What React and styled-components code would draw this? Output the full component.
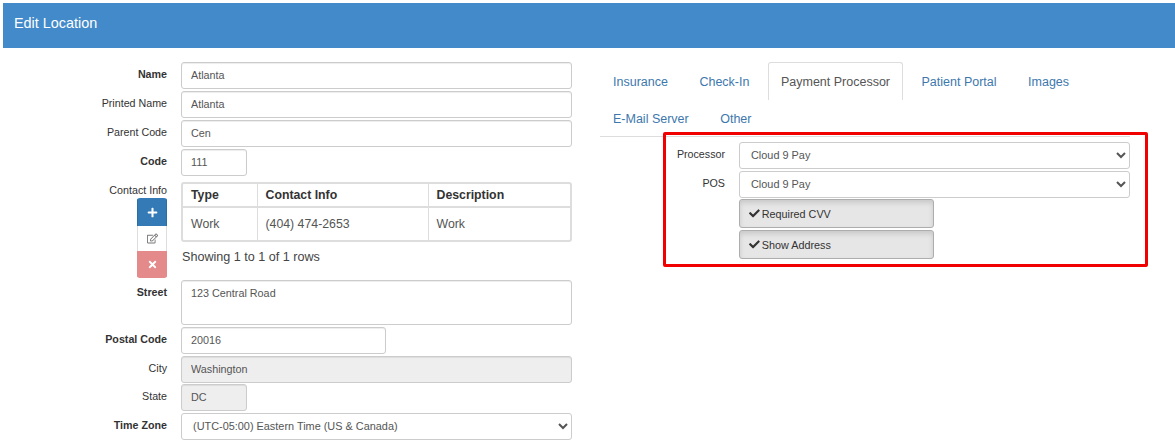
import React from 'react'
import styled, {createGlobalStyle} from 'styled-components'
import {FaCheck, FaPlus, FaRegEdit, FaTimes} from 'react-icons/fa'

const Global = createGlobalStyle`
    * { box-sizing: border-box; }
    html, body { margin: 0; background: #fff; }
    body {
        font-family: "Liberation Sans", Arial, sans-serif;
        color: #333;
        overflow: hidden;
    }
`
const Page = styled.div`
    width: 1175px;
    height: 447px;
    padding: 3px 0 0 3px;
`
const Header = styled.div`
    height: 45px;
    background: #428aca;
    color: #fff;
    font-size: 14.4px;
    line-height: 40px;
    padding-left: 11px;
`
const Body = styled.div`
    display: flex;
    gap: 28px;
    margin-left: -3px;
    padding-top: 14px;
`
const Left = styled.div`
    width: 572px;
    display: flex;
    flex-direction: column;
    gap: 2px;
`
const Row = styled.div`
    display: grid;
    grid-template-columns: 167px 391px;
    column-gap: 14px;
    margin-top: ${props => props.$top || 0}px;
`
const Label = styled.label`
    font-size: 10.7px;
    font-weight: ${props => props.$bold ? 700 : 400};
    text-align: right;
    line-height: 24px;
    color: #333;
`
const Input = styled.input`
    display: block;
    width: ${props => props.$width || '100%'};
    height: 27px;
    padding: 0 9px 2px;
    border: 1px solid #ccc;
    border-radius: 3px;
    background: ${props => props.disabled ? '#eee' : '#fff'};
    font-family: inherit;
    font-size: 10.8px;
    color: #555;
    box-shadow: inset 0 1px 1px rgba(0, 0, 0, .075);
`
const TextArea = styled.textarea`
    display: block;
    width: 100%;
    height: 45px;
    padding: 6px 9px;
    border: 1px solid #ccc;
    border-radius: 3px;
    font-family: inherit;
    font-size: 10.8px;
    color: #555;
    resize: none;
    box-shadow: inset 0 1px 1px rgba(0, 0, 0, .075);
`
const Select = styled.select`
    display: block;
    width: 100%;
    height: 27px;
    padding: 0 7px 2px;
    border: 1px solid #ccc;
    border-radius: 3px;
    background: #fff;
    font-family: inherit;
    font-size: 10.9px;
    color: #555;
`
const LabelStack = styled.div`
    display: flex;
    flex-direction: column;
    align-items: flex-end;
`
const ContactLabel = styled(Label)`
    line-height: 16px;
`
const ButtonStack = styled.div`
    width: 30px;
    display: flex;
    flex-direction: column;
    border-radius: 3px;
    overflow: hidden;
`
const IconButton = styled.button`
    width: 30px;
    height: ${props => props.$height}px;
    padding: 0;
    border: 0;
    border-left: 1px solid ${props => props.$line};
    border-right: 1px solid ${props => props.$line};
    background: ${props => props.$bg};
    color: ${props => props.$color};
    font-size: 11px;
    display: flex;
    align-items: center;
    justify-content: center;
`
const TableBox = styled.div`
    height: 60px;
    border: 2px solid #ddd;
    border-radius: 3px;
    overflow: hidden;
`
const Table = styled.table`
    width: 100%;
    height: 100%;
    border-collapse: collapse;
    table-layout: fixed;
    font-size: 12.3px;
`
const Th = styled.th`
    width: ${props => props.$width || 'auto'};
    height: 23px;
    padding: 0 0 0 8px;
    text-align: left;
    font-weight: 700;
    border-bottom: 2px solid #ddd;
    border-left: 1px solid #ddd;
    &:first-child { border-left: 0; }
`
const Td = styled.td`
    padding: 0 0 0 8px;
    color: #555;
    border-left: 1px solid #ddd;
    &:first-child { border-left: 0; }
`
const RowsInfo = styled.div`
    margin: 8px 0 0 1px;
    font-size: 12.6px;
    line-height: 14px;
    color: #444;
`
const Right = styled.div`
    position: relative;
    width: 530px;
`
const Tabs = styled.div`
    display: flex;
    flex-wrap: wrap;
    align-content: flex-start;
    column-gap: 5.5px;
    height: 75px;
    border-bottom: 1px solid #ddd;
`
const Tab = styled.a`
    height: ${props => props.$active ? 38 : 36}px;
    margin-top: ${props => props.$second ? -1 : 0}px;
    padding: 0 12px;
    border: 1px solid ${props => props.$active ? '#ddd' : 'transparent'};
    border-bottom: 0;
    border-radius: 3px 3px 0 0;
    font-size: 12.5px;
    line-height: 38px;
    color: ${props => props.$active ? '#555' : '#3d78ad'};
`
const Panel = styled.div`
    display: flex;
    flex-direction: column;
    gap: 2px;
    padding-top: 5px;
`
const PanelRow = styled.div`
    display: grid;
    grid-template-columns: 125px 391px;
    column-gap: 14px;
    margin-top: ${props => props.$top || 0}px;
`
const Toggle = styled.button`
    display: flex;
    align-items: center;
    gap: 2px;
    width: 195px;
    height: 29px;
    padding: 0 9px;
    border: 1px solid #adadad;
    border-radius: 3px;
    background: #e6e6e6;
    box-shadow: inset 0 3px 5px rgba(0, 0, 0, .125);
    font-family: inherit;
    font-size: 10.8px;
    color: #333;
`
const Highlight = styled.div`
    position: absolute;
    top: 70px;
    left: 63px;
    width: 485px;
    height: 135px;
    border: 3px solid #f00000;
    border-radius: 2px;
    pointer-events: none;
`

const Field = ({label, bold, children, top}) => (
    <Row $top={top}>
        <Label $bold={bold}>{label}</Label>
        <div>{children}</div>
    </Row>
)

const App = () => {
  return (
    <Page>
        <Global/>
        <Header>Edit Location</Header>
        <Body>
            <Left>
                <Field label="Name" bold><Input readOnly value="Atlanta"/></Field>
                <Field label="Printed Name"><Input readOnly value="Atlanta"/></Field>
                <Field label="Parent Code"><Input readOnly value="Cen"/></Field>
                <Field label="Code" bold><Input readOnly value="111" $width="66px"/></Field>
                <Row $top={4}>
                    <LabelStack>
                        <ContactLabel>Contact Info</ContactLabel>
                        <ButtonStack>
                            <IconButton $height={28} $bg="#337ab7" $line="#2e6da4" $color="#fff"><FaPlus/></IconButton>
                            <IconButton $height={25} $bg="#fff" $line="#ddd" $color="#777"><FaRegEdit/></IconButton>
                            <IconButton $height={27} $bg="#e58a8a" $line="#e58a8a" $color="#fff"><FaTimes/></IconButton>
                        </ButtonStack>
                    </LabelStack>
                    <div>
                        <TableBox>
                            <Table>
                                <thead>
                                    <tr>
                                        <Th $width="74px">Type</Th>
                                        <Th $width="171px">Contact Info</Th>
                                        <Th>Description</Th>
                                    </tr>
                                </thead>
                                <tbody>
                                    <tr>
                                        <Td>Work</Td>
                                        <Td>(404) 474-2653</Td>
                                        <Td>Work</Td>
                                    </tr>
                                </tbody>
                            </Table>
                        </TableBox>
                        <RowsInfo>Showing 1 to 1 of 1 rows</RowsInfo>
                    </div>
                </Row>
                <Field label="Street" bold><TextArea readOnly value="123 Central Road"/></Field>
                <Field label="Postal Code" bold><Input readOnly value="20016" $width="205px"/></Field>
                <Field label="City"><Input disabled value="Washington"/></Field>
                <Field label="State" top={-1}><Input disabled value="DC" $width="66px"/></Field>
                <Field label="Time Zone" bold>
                    <Select defaultValue="est"><option value="est">(UTC-05:00) Eastern Time (US &amp; Canada)</option></Select>
                </Field>
            </Left>
            <Right>
                <Tabs>
                    <Tab>Insurance</Tab>
                    <Tab>Check-In</Tab>
                    <Tab $active>Payment Processor</Tab>
                    <Tab>Patient Portal</Tab>
                    <Tab>Images</Tab>
                    <Tab $second>E-Mail Server</Tab>
                    <Tab $second>Other</Tab>
                </Tabs>
                <Panel>
                    <PanelRow>
                        <Label>Processor</Label>
                        <Select defaultValue="c9"><option value="c9">Cloud 9 Pay</option></Select>
                    </PanelRow>
                    <PanelRow>
                        <Label>POS</Label>
                        <Select defaultValue="c9"><option value="c9">Cloud 9 Pay</option></Select>
                    </PanelRow>
                    <PanelRow $top={-1}>
                        <span/>
                        <Toggle><FaCheck/>Required CVV</Toggle>
                    </PanelRow>
                    <PanelRow>
                        <span/>
                        <Toggle><FaCheck/>Show Address</Toggle>
                    </PanelRow>
                </Panel>
                <Highlight/>
            </Right>
        </Body>
    </Page>
  )
}

export default App
